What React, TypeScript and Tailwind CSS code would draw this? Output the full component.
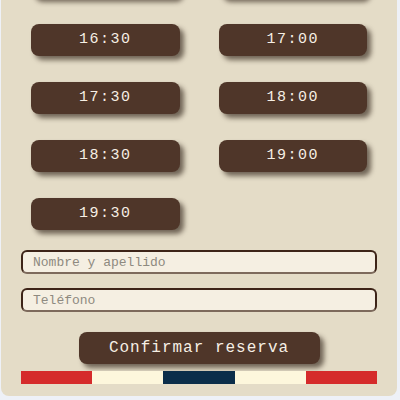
import React from "react";

const HOURS = ["15:30", "16:00", "16:30", "17:00", "17:30", "18:00", "18:30", "19:00", "19:30"];

// bandera a rayas al pie del formulario
const STRIPES = ["bg-[#d52b2b]", "bg-[#fdf7dc]", "bg-[#0b2e4a]", "bg-[#fdf7dc]", "bg-[#d52b2b]"];

export default function App() {
  return (
    <div className="w-[400px] h-[400px] overflow-hidden bg-[#eef1f7] font-['Courier_New',Courier,'Liberation_Mono',monospace]">
      <div className="-mt-[34px] ml-[1px] w-[396px] rounded-b-[8px] bg-[#e4dcc7] px-[20px] pb-[12px]">
        <div className="grid grid-cols-2 gap-x-[39px] gap-y-[26px] px-[10px]">
          {HOURS.map((h) => (
            <button
              key={h}
              className="h-[32px] rounded-[8px] bg-[#4f3629] text-[15px] tracking-[1.5px] text-[#f6efe4] shadow-[4px_4px_5px_rgba(35,22,12,0.6)]"
            >
              {h}
            </button>
          ))}
        </div>

        <div className="mt-[20px] flex flex-col gap-[14px]">
          <input
            placeholder="Nombre y apellido"
            className="h-[24px] w-full rounded-[6px] border-2 border-[#3d2418] border-b-[#7d6a5c] bg-[#f5efe2] px-[10px] text-[13px] placeholder:text-[#8e8a80] outline-none"
          />
          <input
            placeholder="Teléfono"
            className="h-[24px] w-full rounded-[6px] border-2 border-[#3d2418] border-b-[#7d6a5c] bg-[#f5efe2] px-[10px] text-[13px] placeholder:text-[#8e8a80] outline-none"
          />
        </div>

        <div className="mt-[20px] flex justify-center">
          <button className="h-[32px] w-[241px] rounded-[8px] bg-[#4f3629] text-[16px] tracking-[1px] text-[#f6efe4] shadow-[4px_4px_5px_rgba(35,22,12,0.6)]">
            Confirmar reserva
          </button>
        </div>

        <div className="mt-[7px] flex h-[13px]">
          {STRIPES.map((c, i) => (
            <div key={i} className={`flex-1 ${c}`} />
          ))}
        </div>
      </div>
    </div>
  );
}
